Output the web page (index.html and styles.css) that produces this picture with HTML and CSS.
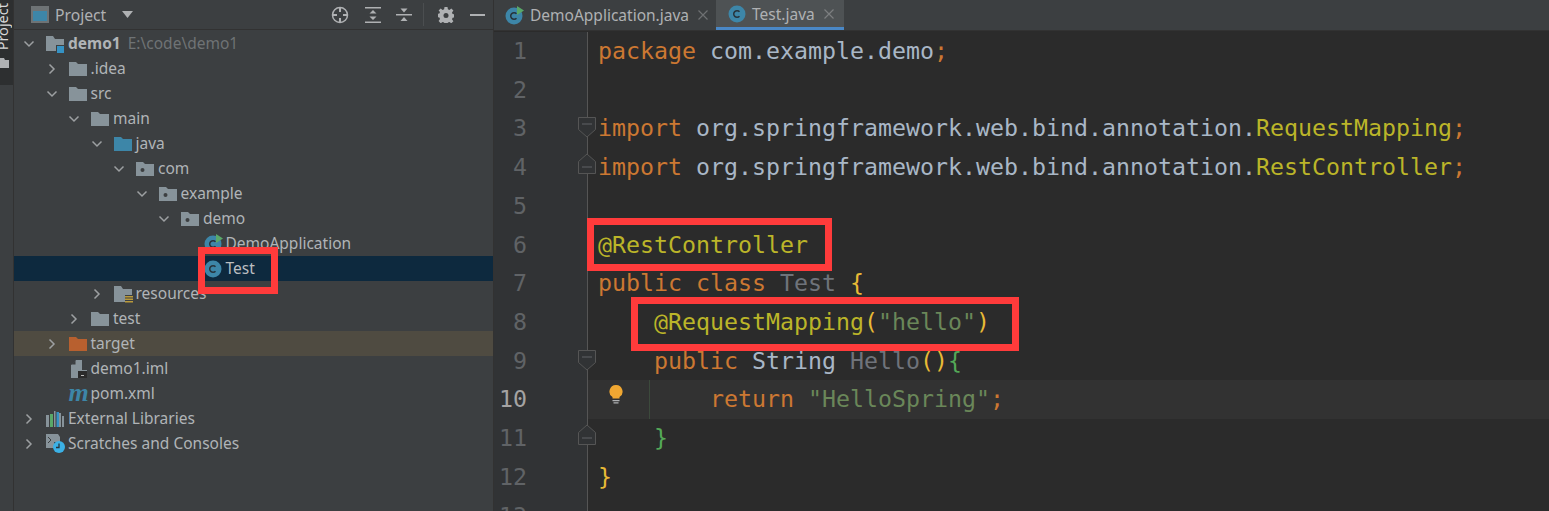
FILE: index.html
```html
<!DOCTYPE html>
<html lang="en">
<head>
<meta charset="utf-8">
<title>Test.java</title>
<link rel="stylesheet" href="styles.css">
</head>
<body>
<svg class="defs" width="0" height="0" aria-hidden="true">
  <defs>
    <symbol id="chev-d" viewBox="0 0 14 14"><path d="M2.5 4.5 7 9l4.5-4.5" fill="none" stroke="#9da0a2" stroke-width="1.5"/></symbol>
    <symbol id="chev-r" viewBox="0 0 14 14"><path d="M4.5 2.5 9 7l-4.5 4.5" fill="none" stroke="#9da0a2" stroke-width="1.5"/></symbol>
    <symbol id="folder" viewBox="0 0 18 16"><path d="M0 1h7l2 2h9v12H0z" fill="#87939a"/></symbol>
    <symbol id="folder-blue" viewBox="0 0 18 16"><path d="M0 1h7l2 2h9v12H0z" fill="#3d86a8"/></symbol>
    <symbol id="folder-orange" viewBox="0 0 18 16"><path d="M0 1h7l2 2h9v12H0z" fill="#b8602f"/></symbol>
    <symbol id="package" viewBox="0 0 18 16"><path d="M0 1h7l2 2h9v12H0z" fill="#87939a"/><circle cx="6.5" cy="9" r="2" fill="#3c3f41"/></symbol>
    <symbol id="class" viewBox="0 0 18 18"><circle cx="9" cy="9" r="8.5" fill="#3d86a8"/><path d="M11.5 6.8A3.3 3.3 0 1 0 11.5 11.2" fill="none" stroke="#27343c" stroke-width="1.5"/></symbol>
    <symbol id="class-run" viewBox="0 0 19 19"><circle cx="9" cy="10" r="8.5" fill="#3d86a8"/><path d="M11.5 7.8A3.3 3.3 0 1 0 11.5 12.2" fill="none" stroke="#27343c" stroke-width="1.5"/><path d="M12 0l7 4.5-7 4.5z" fill="#59a869"/></symbol>
  </defs>
</svg>

<div class="ide">
  <aside class="stripe">
    <div class="stripe-tab">
      <span class="stripe-label">Project</span>
      <svg class="stripe-icon" width="9" height="10" viewBox="0 0 9 10"><path d="M0 0h4l1 2h4v8H0z" fill="#afb1b3"/></svg>
    </div>
  </aside>

  <section class="project">
    <header class="project-head">
      <svg class="head-win" width="18" height="17" viewBox="0 0 18 17"><rect width="18" height="17" fill="#6e7375"/><rect x="2" y="5" width="14" height="10" fill="#3d86a8"/></svg>
      <span class="head-title">Project</span>
      <svg class="head-caret" width="11" height="7" viewBox="0 0 11 7"><path d="M0 0h11L5.500 7z" fill="#afb1b3"/></svg>
      <div class="head-tools">
        <svg class="tool-target" width="18" height="18" viewBox="0 0 18 18"><circle cx="9" cy="9" r="7.500" fill="none" stroke="#afb1b3" stroke-width="1.500"/><path d="M9 1v5M9 12v5M1 9h5M12 9h5" stroke="#afb1b3" stroke-width="2"/></svg>
        <svg width="16" height="18" viewBox="0 0 16 18"><path d="M0 1h16v1.500H0zM0 15.500h16V17H0z" fill="#afb1b3"/><path d="M8 4l3.500 3.500h-7zM8 14l-3.500-3.500h7z" fill="#afb1b3"/></svg>
        <svg width="16" height="18" viewBox="0 0 16 18"><path d="M0 8h16v1.500H0z" fill="#afb1b3"/><path d="M8 6.500 4.500 2.500h7zM8 11l3.500 4h-7z" fill="#afb1b3"/></svg>
        <span class="tool-sep"></span>
        <svg width="16" height="16" viewBox="0 0 16 16"><path d="M6.500 0h3l.4 2.300 1.500.6L13.300 1.500l2.100 2.100-1.400 1.900.6 1.500 2.300.4v3l-2.300.4-.6 1.500 1.400 1.900-2.100 2.100-1.900-1.400-1.500.6-.4 2.300h-3l-.4-2.300-1.500-.6-1.900 1.400L.6 13.900 2 12l-.6-1.500L-.9 10V7l2.300-.4L2 5.100.6 3.600 2.700 1.500l1.900 1.400 1.500-.6z" fill="#afb1b3"/><circle cx="8" cy="8.500" r="2.500" fill="#3c3f41"/></svg>
        <svg class="tool-min" width="15" height="2" viewBox="0 0 15 2"><rect width="15" height="2" fill="#afb1b3"/></svg>
      </div>
    </header>

    <div class="tree">
      <div class="row l0">
        <svg class="chev"><use href="#chev-d"/></svg>
        <svg class="ico" width="18" height="18" viewBox="0 0 18 18"><path d="M0 1h7l2 3h9v6h-8v6H0z" fill="#87939a"/><rect x="11" y="11" width="7" height="7" fill="#3592c4"/></svg>
        <span class="name"><b>demo1</b> <span class="path">E:\code\demo1</span></span>
      </div>
      <div class="row l1"><svg class="chev"><use href="#chev-r"/></svg><svg class="ico" width="18" height="16"><use href="#folder"/></svg><span class="name">.idea</span></div>
      <div class="row l1"><svg class="chev"><use href="#chev-d"/></svg><svg class="ico" width="18" height="16"><use href="#folder"/></svg><span class="name">src</span></div>
      <div class="row l2"><svg class="chev"><use href="#chev-d"/></svg><svg class="ico" width="18" height="16"><use href="#folder"/></svg><span class="name">main</span></div>
      <div class="row l3"><svg class="chev"><use href="#chev-d"/></svg><svg class="ico" width="18" height="16"><use href="#folder-blue"/></svg><span class="name">java</span></div>
      <div class="row l4"><svg class="chev"><use href="#chev-d"/></svg><svg class="ico" width="18" height="16"><use href="#package"/></svg><span class="name">com</span></div>
      <div class="row l5"><svg class="chev"><use href="#chev-d"/></svg><svg class="ico" width="18" height="16"><use href="#package"/></svg><span class="name">example</span></div>
      <div class="row l6"><svg class="chev"><use href="#chev-d"/></svg><svg class="ico" width="18" height="16"><use href="#package"/></svg><span class="name">demo</span></div>
      <div class="row l7"><span class="chev"></span><svg class="ico" width="19" height="19"><use href="#class-run"/></svg><span class="name">DemoApplication</span></div>
      <div class="row l7 selected"><span class="chev"></span><svg class="ico" width="18" height="18"><use href="#class"/></svg><span class="name">Test</span></div>
      <div class="row l3"><svg class="chev"><use href="#chev-r"/></svg><svg class="ico" width="19" height="18" viewBox="0 0 19 18"><path d="M0 1h7l2 3h9v6h-7v7H0z" fill="#87939a"/><path d="M11 11h8v1.500h-8zM11 13.500h8V15h-8zM11 16h8v1.500h-8z" fill="#b99a3c"/></svg><span class="name">resources</span></div>
      <div class="row l2"><svg class="chev"><use href="#chev-r"/></svg><svg class="ico" width="18" height="16"><use href="#folder"/></svg><span class="name">test</span></div>
      <div class="row l1 excluded"><svg class="chev"><use href="#chev-r"/></svg><svg class="ico" width="18" height="16"><use href="#folder-orange"/></svg><span class="name">target</span></div>
      <div class="row l1"><span class="chev"></span><svg class="ico" width="18" height="18" viewBox="0 0 18 18"><path d="M7 0h6v10h5v8H2V5z" fill="#87939a"/><path d="M6.500 0v4.500H2z" fill="#3c3f41"/><rect x="9" y="11" width="9" height="7" fill="#2b2b2b"/><rect x="12" y="15" width="3" height="1" fill="#bbb"/></svg><span class="name">demo1.iml</span></div>
      <div class="row l1"><span class="chev"></span><span class="ico maven">m</span><span class="name">pom.xml</span></div>
      <div class="row l0"><svg class="chev"><use href="#chev-r"/></svg><svg class="ico" width="18" height="16" viewBox="0 0 18 16"><path d="M0 4h3v12H0zM13 2h2v14h-2zM16 5h2v11h-2z" fill="#87939a"/><path d="M4 3h3v13H4z" fill="#59a869"/><path d="M8 0h1.500v16H8z" fill="#87939a"/><path d="M10.500 1H13v15h-2.500z" fill="#3592c4"/></svg><span class="name">External Libraries</span></div>
      <div class="row l0"><svg class="chev"><use href="#chev-r"/></svg><svg class="ico" width="19" height="19" viewBox="0 0 19 19"><path d="M0 0h12l2 3v5H8v6H0z" fill="#87939a"/><path d="M2 3l3 3-3 3" fill="none" stroke="#3c3f41" stroke-width="1"/><circle cx="13" cy="13" r="6" fill="#3bb1e6"/><path d="M13 9.500V13.500h-3" fill="none" stroke="#27343c" stroke-width="1.300"/></svg><span class="name">Scratches and Consoles</span></div>
    </div>
    <span class="mark mark-test"></span>
  </section>

  <main class="editor">
    <nav class="tabs">
      <div class="tab tab-demo"><svg width="19" height="19"><use href="#class-run"/></svg><span class="tab-name">DemoApplication.java</span><svg class="tab-x" width="10" height="10" viewBox="0 0 10 10"><path d="M.5.500l9 9M9.500.500l-9 9" stroke="#6e7072" stroke-width="1.200"/></svg></div>
      <div class="tab tab-test"><svg width="18" height="18"><use href="#class"/></svg><span class="tab-name">Test.java</span><svg class="tab-x" width="10" height="10" viewBox="0 0 10 10"><path d="M.5.500l9 9M9.500.500l-9 9" stroke="#7c7e80" stroke-width="1.200"/></svg></div>
    </nav>

    <div class="code">
      <div class="line"><div class="num">1</div><div class="src"><span class="kw">package</span> com.example.demo<span class="kw">;</span></div></div>
      <div class="line"><div class="num">2</div><div class="src"></div></div>
      <div class="line"><div class="num">3<svg class="fold" width="18" height="21" viewBox="0 0 18 21"><path d="M.5.500h17v12L9 20 .5 12.500z" fill="#313335" stroke="#555" /><path d="M4 7h10" stroke="#606366"/></svg></div><div class="src"><span class="kw">import</span> org.springframework.web.bind.annotation.<span class="ann">RequestMapping</span><span class="kw">;</span></div></div>
      <div class="line"><div class="num">4<svg class="fold fold-end" width="18" height="21" viewBox="0 0 18 21"><path d="M.5 20.500h17v-12L9 1 .5 8.500z" fill="#313335" stroke="#555"/><path d="M4 14h10" stroke="#606366"/></svg></div><div class="src"><span class="kw">import</span> org.springframework.web.bind.annotation.<span class="ann">RestController</span><span class="kw">;</span></div></div>
      <div class="line"><div class="num">5</div><div class="src"></div></div>
      <div class="line"><div class="num">6</div><div class="src"><span class="ann">@RestController</span></div></div>
      <div class="line"><div class="num">7</div><div class="src"><span class="kw">public class</span> <span class="dim">Test</span> <span class="yel">{</span></div></div>
      <div class="line"><div class="num">8</div><div class="src">    <span class="ann">@RequestMapping</span><span class="yel">(</span><span class="str">"hello"</span><span class="yel">)</span></div></div>
      <div class="line"><div class="num">9<svg class="fold" width="18" height="21" viewBox="0 0 18 21"><path d="M.5.500h17v12L9 20 .5 12.500z" fill="#313335" stroke="#555"/><path d="M4 7h10" stroke="#606366"/></svg></div><div class="src">    <span class="kw">public</span> String <span class="dim">Hello</span><span class="yel">()</span><span class="grn">{</span></div></div>
      <div class="line current"><div class="num">10</div><div class="src">        <span class="kw">return</span> <span class="str">"HelloSpring"</span><span class="kw">;</span><svg class="bulb" width="14" height="19" viewBox="0 0 14 19"><path d="M7 0a6.500 6.500 0 0 1 3.500 12v1.500h-7V12A6.500 6.500 0 0 1 7 0z" fill="#f0a732"/><path d="M3.500 15h7v1.300h-7zM4.500 17.200h5v1.300h-5z" fill="#afb1b3"/></svg><span class="guide"></span></div></div>
      <div class="line"><div class="num">11<svg class="fold fold-end" width="18" height="21" viewBox="0 0 18 21"><path d="M.5 20.500h17v-12L9 1 .5 8.500z" fill="#313335" stroke="#555"/><path d="M4 14h10" stroke="#606366"/></svg></div><div class="src">    <span class="grn">}</span></div></div>
      <div class="line"><div class="num">12</div><div class="src"><span class="yel">}</span></div></div>
      <div class="line"><div class="num">13</div><div class="src"></div></div>
    </div>
    <span class="mark mark-rest"></span>
    <span class="mark mark-req"></span>
  </main>
</div>
</body>
</html>
```
FILE: styles.css
```css
* { box-sizing: border-box; }
html, body { margin: 0; padding: 0; height: 100%; overflow: hidden; }
body { background: #2b2b2b; }
.defs { position: absolute; }
.ide { display: flex; height: 511px; width: 1549px; position: relative; overflow: hidden; }

.stripe { width: 14px; flex: none; background: #3c3f41; border-right: 1px solid #323232; }
.stripe-tab { height: 85px; background: #2d2f30; display: flex; flex-direction: column; align-items: flex-start; overflow: hidden; justify-content: flex-end; padding-bottom: 17px; gap: 8px; }
.stripe-label { writing-mode: vertical-rl; transform: rotate(180deg); font: 14.5px/13px "Noto Sans", sans-serif; color: #d8d8d8; margin-left: -4px; }
.stripe-icon { flex: none; }

.project { width: 480px; flex: none; background: #3c3f41; border-right: 1px solid #323232; position: relative; font-family: "Noto Sans", sans-serif; }
.project-head { height: 30px; display: flex; align-items: center; padding-left: 17px; border-bottom: 1px solid #323232; color: #afb1b3; font-size: 15.7px; }
.head-win { flex: none; }
.head-title { margin-left: 6px; }
.head-caret { margin-left: 16px; }
.head-tools { margin-left: auto; display: flex; align-items: center; gap: 15px; padding-right: 8px; }
.tool-target { margin-right: 1px; }
.tool-sep { width: 1px; height: 23px; background: #4b4e50; margin: 0 -1px 0 -4px; }
.tool-min { margin-left: 1px; }

.tree { display: flex; flex-direction: column; padding-top: 1px; }
.row { height: 25px; display: flex; align-items: center; color: #b0b4b7; font-size: 15.5px; white-space: nowrap; }
.l0 { padding-left: 8px; }
.l1 { padding-left: 30.5px; }
.l2 { padding-left: 53px; }
.l3 { padding-left: 75.5px; }
.l4 { padding-left: 98px; }
.l5 { padding-left: 120.5px; }
.l6 { padding-left: 143px; }
.l7 { padding-left: 165.5px; }
.chev { width: 14px; height: 14px; flex: none; margin-right: 10px; }
.ico { flex: none; margin-right: 4px; }
.row svg.ico[width="19"] { margin-right: 3px; }
.name { flex: none; padding-bottom: 2px; }
.name b { font-weight: 700; }
.path { color: #6f7375; margin-left: 3px; }
.selected { background: #0d293e; color: #bbbec0; }
.excluded { background: #4f4b41; }
.maven { width: 18px; height: 18px; font: italic 700 26px/15px "Liberation Serif", serif; color: #3d86a8; }

.editor { flex: 1; min-width: 0; position: relative; display: flex; flex-direction: column; }
.tabs { height: 31px; flex: none; background: #3c3f41; border-bottom: 1px solid #323232; display: flex; font: 15.5px "Noto Sans", sans-serif; color: #afb1b3; }
.tab { height: 30px; display: flex; align-items: center; flex: none; }
.tab-demo { width: 222px; padding-left: 11px; }
.tab-test { width: 128px; padding-left: 12px; background: #4e5254; border-bottom: 3px solid #4a88c7; padding-bottom: 0; }
.tab-name { margin-left: 6px; }
.tab-x { margin-left: 9px; }

.code { flex: 1; display: flex; flex-direction: column; overflow: hidden; padding-top: 1px; font: 23.25px/38.73px "DejaVu Sans Mono", monospace; color: #a9b7c6; }
.line { height: 38.73px; flex: none; display: flex; white-space: pre; }
.num { width: 94px; flex: none; background: #313335; border-right: 1px solid #555; color: #606366; text-align: right; padding-right: 60px; position: relative; }
.src { flex: 1; padding-left: 10px; position: relative; }
.current .src { background: #323232; }
.current .num { color: #a4a3a3; }
.kw { color: #cc7832; }
.ann { color: #bbb529; }
.str { color: #6a8759; }
.dim { color: #6f737a; }
.yel { color: #e8ba36; }
.grn { color: #54a857; }
.fold { position: absolute; right: -9px; top: 8px; }
.fold-end { top: 5px; }
.bulb { position: absolute; left: 21px; top: 5px; }
.guide { position: absolute; left: 61px; top: 0; bottom: 0; width: 1px; background: #3c4a3c; }

.mark { position: absolute; border: 7px solid #ff3b3b; pointer-events: none; }
.mark-test { left: 184px; top: 247px; width: 80px; height: 47px; }
.mark-rest { left: 93px; top: 218px; width: 245px; height: 53px; }
.mark-req { left: 137px; top: 297px; width: 388px; height: 54px; }
```
